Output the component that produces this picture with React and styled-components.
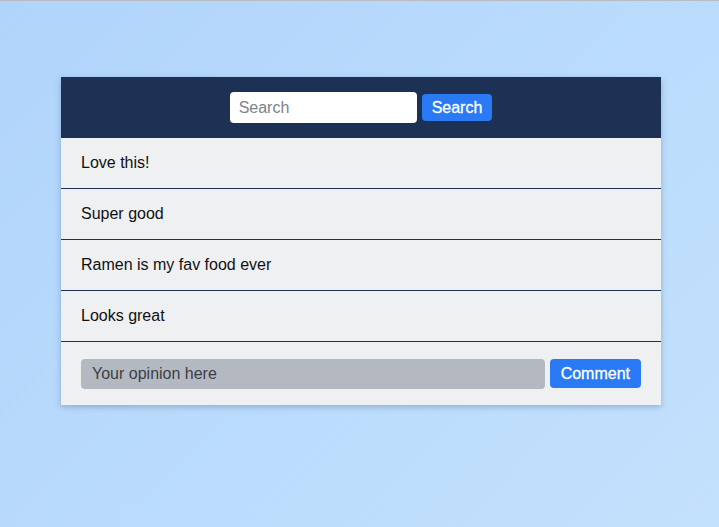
import styled, { createGlobalStyle } from 'styled-components';

const GlobalStyle = createGlobalStyle`
  html, body {
    margin: 0;
    padding: 0;
  }
  body {
    font-family: 'Liberation Sans', Arial, sans-serif;
    border-top: 1px solid #b9bcc2;
  }
`;

const Page = styled.div`
  min-height: 526px;
  background: linear-gradient(135deg, #b1d4fb 0%, #bbdcfc 60%, #c3e1fc 100%);
  padding-top: 76px;
  box-sizing: border-box;
`;

const Card = styled.div`
  width: 600px;
  margin-left: 61px;
  background: #eff0f2;
  box-shadow: 0 2px 6px rgba(60, 90, 130, 0.35);
`;

const Header = styled.div`
  height: 61px;
  background: #1c3153;
  display: flex;
  align-items: center;
  justify-content: center;
  gap: 5px;
`;

const SearchInput = styled.input`
  width: 187px;
  height: 31px;
  box-sizing: border-box;
  border: none;
  border-radius: 4px;
  background: #fff;
  padding: 0 9px;
  font-family: 'Liberation Sans', Arial, sans-serif;
  font-size: 16px;
  outline: none;
  &::placeholder {
    color: #7d838c;
  }
`;

const Button = styled.button`
  height: ${(p) => p.$h}px;
  padding: 0 ${(p) => p.$px}px;
  border: none;
  border-radius: 4px;
  background: #2a7af5;
  color: #fff;
  font-family: 'Liberation Sans', Arial, sans-serif;
  font-size: 16px;
  font-weight: 400;
  -webkit-text-stroke: 0.3px #fff;
`;

const Row = styled.div`
  height: 51px;
  box-sizing: border-box;
  border-bottom: 1px solid #1c3153;
  display: flex;
  align-items: center;
  padding-left: 20px;
  padding-bottom: 1px;
  font-size: 16px;
  color: #111;
`;

const Footer = styled.div`
  height: 63px;
  display: flex;
  align-items: center;
  padding: 0 20px;
  gap: 5px;
`;

const CommentInput = styled.input`
  flex: 1;
  height: 30px;
  box-sizing: border-box;
  border: none;
  border-radius: 4px;
  background: #b4b9c1;
  padding: 0 11px;
  font-family: 'Liberation Sans', Arial, sans-serif;
  font-size: 16px;
  outline: none;
  &::placeholder {
    color: #3a3f47;
  }
`;

const comments = ['Love this!', 'Super good', 'Ramen is my fav food ever', 'Looks great'];

export default function App() {
  return (
    <>
      <GlobalStyle />
      <Page>
        <Card>
          <Header>
            <SearchInput placeholder="Search" />
            <Button $h={27} $px={10}>Search</Button>
          </Header>
          {comments.map((c) => (
            <Row key={c}>{c}</Row>
          ))}
          <Footer>
            <CommentInput placeholder="Your opinion here" />
            <Button $h={29} $px={11}>Comment</Button>
          </Footer>
        </Card>
      </Page>
    </>
  );
}
